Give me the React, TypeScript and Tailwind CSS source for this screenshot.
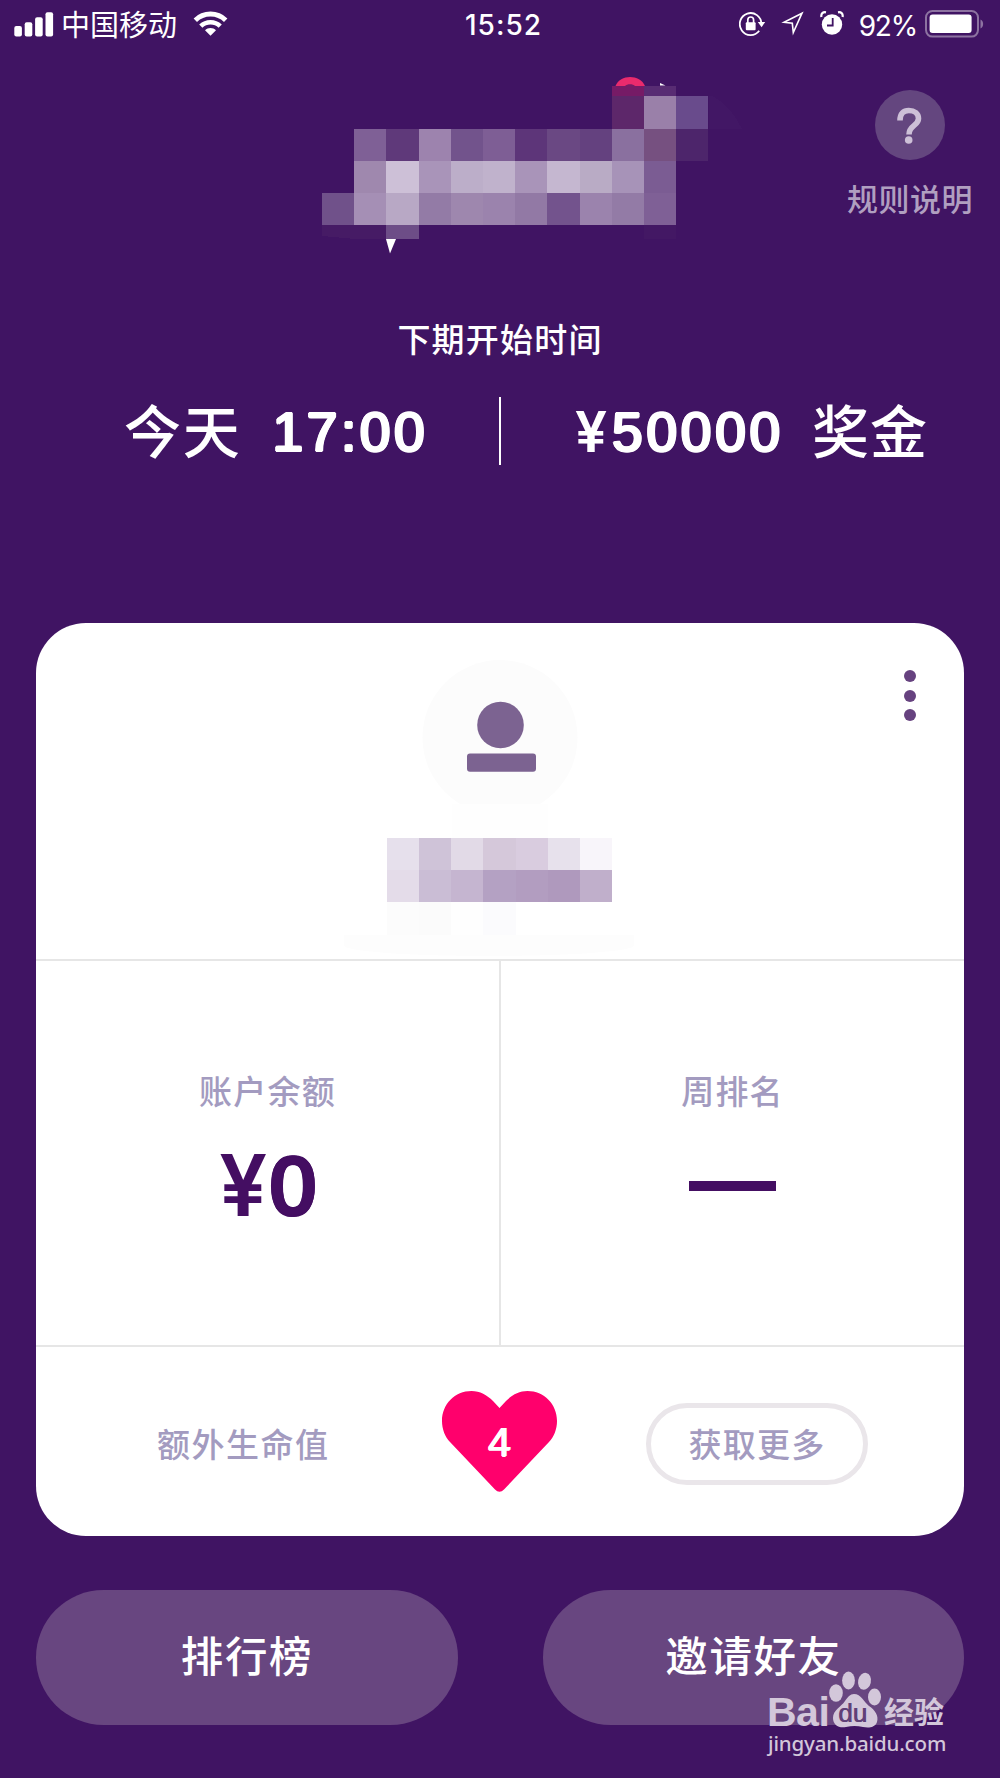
import React from "react";

const CJK = "font-['Liberation_Sans','Noto_Sans_CJK_SC',sans-serif]";
const ROUND = "font-['Liberation_Sans',sans-serif]";
const YEN = "font-['Inter',sans-serif] font-semibold";

/* Evenly spaced copies around each glyph thicken it and round off its corners. */
const SOFT_SM =
  "[text-shadow:0.8px_0_currentColor,-0.8px_0_currentColor,0_1px_currentColor]";
const SOFT_MD =
  "[text-shadow:1.5px_0_currentColor,-1.5px_0_currentColor,0.8px_1px_currentColor,-0.8px_1px_currentColor,0.8px_-1px_currentColor,-0.8px_-1px_currentColor]";
const SOFT_LG =
  "[text-shadow:2.4px_0_currentColor,-2.4px_0_currentColor,2px_1px_currentColor,-2px_1px_currentColor,2px_-1px_currentColor,-2px_-1px_currentColor,1px_2px_currentColor,-1px_2px_currentColor,1px_-2px_currentColor,-1px_-2px_currentColor]";

type Cell = [col: number, row: number, color: string];

const LOGO_ROWS = [
  { y: 25.5, h: 11 },
  { y: 36.3, h: 32.3 },
  { y: 68.6, h: 32.3 },
  { y: 100.9, h: 32.3 },
  { y: 133.2, h: 32 },
  { y: 165.2, h: 13.8 },
];

const LOGO_CELLS: Cell[] = [
  [9, 0, "#761b66"], [10, 0, "#582c73"],
  [9, 1, "#5d276a"], [10, 1, "#9a80a9"], [11, 1, "#694b8c"],
  [1, 2, "#7f6096"], [2, 2, "#5f397a"], [3, 2, "#9d83ae"], [4, 2, "#72538c"], [5, 2, "#7e5e95"],
  [6, 2, "#5d3579"], [7, 2, "#6a4883"], [8, 2, "#64417f"], [9, 2, "#8a709f"], [10, 2, "#765080"], [11, 2, "#4d256b"],
  [1, 3, "#9f88ae"], [2, 3, "#cdc0d7"], [3, 3, "#a994b9"], [4, 3, "#bcaec9"], [5, 3, "#c0b2cc"],
  [6, 3, "#a994b9"], [7, 3, "#c5b7d0"], [8, 3, "#b9abc5"], [9, 3, "#a793b8"], [10, 3, "#7b5c93"],
  [0, 4, "#70518a"], [1, 4, "#a58fb5"], [2, 4, "#b8a8c5"], [3, 4, "#937ba6"], [4, 4, "#9e87ae"],
  [5, 4, "#9b83ad"], [6, 4, "#9279a5"], [7, 4, "#73538d"], [8, 4, "#9b83ad"], [9, 4, "#937ba6"], [10, 4, "#7f6096"],
  [2, 5, "#6d4d87"], [10, 5, "#431864"],
];

const NAME_ROWS = [
  ["#e6e0ec", "#cfc3d8", "#e2dae7", "#d5c8da", "#d9ccdf", "#e7e1ec", "#f8f5fa"],
  ["#e4dce9", "#cabdd5", "#c5b5d0", "#b4a1c3", "#b29dc0", "#af99bd", "#c0afcb"],
  ["#fcfcfc", "#fbfbfb", "#fefefe", "#fbfbfd", "#ffffff", "#ffffff", "#ffffff"],
];

function StatusBar() {
  return (
    <header className={`grid h-[50px] shrink-0 grid-cols-[1fr_auto_1fr] items-center text-white ${CJK}`}>
      <div className="flex items-center pl-[14px]">
        <svg className="-mt-[2px]" width="40" height="25" viewBox="0 0 40 25" fill="#fff">
          <rect x="0.3" y="14" width="7.6" height="10.5" rx="2" />
          <rect x="10.7" y="10.3" width="7.6" height="14.2" rx="2" />
          <rect x="21.1" y="5.3" width="7.6" height="19.2" rx="2" />
          <rect x="31.5" y="0.3" width="7.6" height="24.2" rx="2" />
        </svg>
        <span className="mt-px ml-[7px] text-[29px] leading-[50px]">中国移动</span>
        <svg className="-mt-[4px] ml-[16px]" width="35" height="26" viewBox="0 0 35 26" fill="none" stroke="#fff" strokeWidth="5">
          <path d="M2.3 9.2C10.6.9 24.4.9 32.7 9.2" strokeWidth="4.8" />
          <path d="M7.8 15.2C13.2 10 21.8 10 27.2 15.2" strokeWidth="4.6" />
          <path d="M17.5 24.8L12 19.2C15 16.3 20 16.3 23 19.2Z" fill="#fff" stroke="none" />
        </svg>
      </div>
      <span className="-mt-px pl-[7px] font-['Inter',sans-serif] text-[28px] leading-[50px] font-medium tracking-[1px]">15:52</span>
      <div className="-mt-[2px] flex items-center justify-end pr-[16px]">
        <svg className="-mt-[2px]" width="27" height="26" viewBox="0 0 27 26" fill="none" stroke="#fff" strokeWidth="1.8">
          <path d="M22.4 13A10.8 11 0 1 0 20.2 19.7" />
          <path d="M18.8 11H26.2L22.6 16.2Z" fill="#fff" stroke="none" />
          <rect x="6.8" y="11.2" width="9.8" height="8" rx="1" fill="#fff" stroke="none" />
          <path d="M8.8 12V9A2.9 3 0 0 1 14.6 9V12" strokeWidth="1.7" />
        </svg>
        <svg className="-mt-[2px] ml-[15px]" width="23" height="25" viewBox="0 0 23 25" fill="none" stroke="#fff" strokeWidth="1.6">
          <path d="M21 2.2L3 11.3L11.3 12.3L12.3 21.5Z" />
        </svg>
        <svg className="-mt-[2px] ml-[16px]" width="24" height="25" viewBox="0 0 24 25">
          <circle cx="12" cy="13.5" r="10.2" fill="#fff" />
          <path d="M1.4 6C.8 2.5 3 .8 6 1.3M22.6 6C23.2 2.5 21 .8 18 1.3" stroke="#fff" strokeWidth="2.2" fill="none" />
          <path d="M12.7 7V14.5H7" stroke="#401463" strokeWidth="1.8" fill="none" />
        </svg>
        <span className="mt-[2px] ml-[15px] font-['Inter',sans-serif] text-[28px] leading-[50px] tracking-[-1.2px]">92%</span>
        <svg className="-mt-px ml-[8px]" width="59" height="28" viewBox="0 0 59 28" fill="none">
          <rect x="1" y="1" width="52" height="25.6" rx="6.5" stroke="#8d73a1" strokeWidth="2" />
          <rect x="4.6" y="4.6" width="42" height="18.4" rx="3" fill="#fff" />
          <path d="M55.5 9.5C59 11 59 17 55.5 18.5Z" fill="#8d73a1" />
        </svg>
      </div>
    </header>
  );
}

function PixelLogo() {
  return (
    <svg width="460" height="200" viewBox="0 0 460 200" shapeRendering="crispEdges">
      <path d="M408.7 36.3H413C425 43 434 53 442 69H408.7Z" fill="#421765" />
      <path d="M22 165.2H86.5V179H56L22 176Z" fill="#461b65" />
      <path d="M315.5 26C320 14 340 14 345 26Z" fill="#e92b6d" shapeRendering="auto" />
      <path d="M325 26C327 23.5 333 23.5 335 26Z" fill="#761b66" shapeRendering="auto" />
      <path d="M360 23L365.5 25.5H360Z" fill="#fff" shapeRendering="auto" />
      {LOGO_CELLS.map(([c, r, color]) => (
        <rect key={`${c}-${r}`} x={22 + c * 32.2} y={LOGO_ROWS[r].y} width={32.2} height={LOGO_ROWS[r].h} fill={color} />
      ))}
      <path d="M86 179H96L90 193.5Z" fill="#fff" shapeRendering="auto" />
    </svg>
  );
}

function Hero() {
  return (
    <section className="grid h-[220px] shrink-0 grid-cols-[300px_460px_1fr]">
      <div />
      <div className="pt-[10px]">
        <PixelLogo />
      </div>
      <div className="flex flex-col items-center pt-10 pl-[60px]">
        <div className="flex size-[70px] items-center justify-center rounded-full bg-[#64467f]">
          <svg className="-ml-[2px]" width="26" height="38" viewBox="0 0 26 38" fill="none">
            <path d="M4 14.5C4 7.5 7.5 4.5 12.8 4.5C18.5 4.5 22.5 7.5 22.5 12.5C22.5 20 13 19 13 28.5" stroke="#cdc0d7" strokeWidth="5.6" />
            <circle cx="12.7" cy="34" r="3.8" fill="#cdc0d7" />
          </svg>
        </div>
        <span className={`mt-[18px] text-[31px] leading-[46px] font-medium tracking-[0.5px] whitespace-nowrap text-[#b09fc0] ${CJK}`}>规则说明</span>
      </div>
    </section>
  );
}

function NextRound() {
  return (
    <section className="flex h-[353px] shrink-0 flex-col items-center pt-[46px] text-white">
      <h2 className={`text-[33px] leading-[50px] font-medium tracking-[1.2px] ${CJK}`}>下期开始时间</h2>
      <div className="mt-[28px] grid h-[68px] w-full grid-cols-[499px_2px_499px] items-center">
        <div className="flex items-center pl-[124px]">
          <span className={`mt-[5px] text-[57px] leading-[68px] font-medium tracking-[1.8px] whitespace-nowrap ${CJK}`}>今天</span>
          <span className={`mt-[3px] ml-[31px] text-[55px] leading-[68px] tracking-[3.6px] ${SOFT_MD} ${ROUND}`}>17:00</span>
        </div>
        <div className="h-[68px] bg-white" />
        <div className="flex items-center pl-[74px]">
          <span className={`mt-[3px] w-[37px] text-[57px] leading-[68px] ${YEN}`}>¥</span>
          <span className={`mt-[3px] text-[55px] leading-[68px] tracking-[3.8px] ${SOFT_MD} ${ROUND}`}>50000</span>
          <span className={`mt-[5px] ml-[28px] text-[57px] leading-[68px] font-medium tracking-[1px] whitespace-nowrap ${CJK}`}>奖金</span>
        </div>
      </div>
    </section>
  );
}

function Profile() {
  return (
    <div className="relative flex h-[336px] flex-col items-center pt-[37px]">
      <svg width="156" height="144" viewBox="0 0 156 144">
        <circle cx="78" cy="77.5" r="77.5" fill="#fcfcfc" />
        <circle cx="78.5" cy="65" r="23.3" fill="#7c6391" />
        <rect x="45" y="93.5" width="69" height="18.3" rx="3" fill="#7c6391" />
      </svg>
      <div className="h-[34px] w-24 bg-[#fefefe]" />
      <div className="mr-px grid grid-cols-[repeat(7,32.2px)] grid-rows-[repeat(3,32.2px)]">
        {NAME_ROWS.flat().map((color, i) => (
          <div key={i} style={{ backgroundColor: color }} />
        ))}
      </div>
      <div className="mr-[22px] h-[21px] w-[290px] rounded-b-[100%] bg-[#fdfdfd]" />
      <button aria-label="More" className="absolute top-[47px] right-[48px] flex flex-col gap-[7.5px]">
        <span className="size-3 rounded-full bg-[#66427f]" />
        <span className="size-3 rounded-full bg-[#66427f]" />
        <span className="size-3 rounded-full bg-[#66427f]" />
      </button>
    </div>
  );
}

function Heart() {
  return (
    <div className="relative h-[102px] w-[115px]">
      <svg width="115" height="102" viewBox="0 0 115 102">
        <path d="M57.5 17L51 10C45 4 38 0 29.5 0C13 0 0 13 0 30C0 38 3 46 8 51L53 98.5Q57.5 103 62 98.5L107 51C112 46 115 38 115 30C115 13 102 0 85.5 0C77 0 70 4 64 10Z" fill="#ff006c" />
      </svg>
      <span className={`absolute inset-x-0 top-[30px] text-center text-[41px] leading-[42px] text-white ${SOFT_SM} ${ROUND}`}>4</span>
    </div>
  );
}

function Card() {
  return (
    <section className={`mx-9 flex h-[913px] shrink-0 flex-col overflow-hidden rounded-[50px] bg-white ${CJK}`}>
      <Profile />
      <div className="grid h-[388px] grid-cols-[465px_1fr] border-y-2 border-[#e6e6e6] text-center">
        <div className="border-r-2 border-[#e6e6e6] pt-[107px]">
          <div className="text-[33px] leading-[50px] font-medium tracking-[1.2px] text-[#a39bc0]">账户余额</div>
          <div className="mt-[22px] flex justify-center text-[#440e62]">
            <span className={`pr-[3px] text-[85px] leading-[92px] ${YEN}`}>¥</span>
            <span className={`text-[82px] leading-[92px] ${SOFT_LG} ${ROUND}`}>0</span>
          </div>
        </div>
        <div className="flex flex-col items-center pt-[107px]">
          <div className="text-[33px] leading-[50px] font-medium tracking-[1.2px] text-[#a39bc0]">周排名</div>
          <div className="mt-[63px] h-[10px] w-[87px] bg-[#440e62]" />
        </div>
      </div>
      <div className="flex h-[189px] items-center pl-[121px]">
        <span className="mt-[8px] w-[285px] text-[33px] leading-[50px] font-medium tracking-[1.5px] text-[#a39bc0]">额外生命值</span>
        <Heart />
        <button className="mt-[5px] ml-[89px] h-[82px] w-[222px] rounded-full border-[5px] border-[#eae6ea] pt-[3px] text-[33px] font-medium tracking-[1.2px] text-[#a39bc0]">
          获取更多
        </button>
      </div>
    </section>
  );
}

function Watermark() {
  return (
    <div className="absolute right-[50px] bottom-[20px] w-[182px] text-[#d3c7da]">
      <div className="relative h-[60px]">
        <span className="absolute bottom-[2px] left-[-1px] font-['Liberation_Sans',sans-serif] text-[41px] leading-[30px] font-bold tracking-[-0.5px]">Bai</span>
        <svg className="absolute bottom-0 left-[60px]" width="54" height="58" viewBox="0 0 54 58" fill="currentColor">
          <ellipse cx="8" cy="22" rx="6.8" ry="8.8" />
          <ellipse cx="20.5" cy="9.5" rx="6.4" ry="9" />
          <ellipse cx="36.5" cy="10.3" rx="6.4" ry="8.5" transform="rotate(12 36.5 10.3)" />
          <ellipse cx="46.5" cy="26" rx="6.5" ry="8.5" />
          <path d="M26 23C33 23 36 31 41 35C47 39 51 45 49 51C47 57 40 57 35 56C29 54.5 24 54.5 18 56C11 57.5 5 54 5 47C5 39 13 36 17 30C20 26 22 23 26 23Z" />
        </svg>
        <span className="absolute bottom-[3px] left-[70px] font-['Liberation_Sans',sans-serif] text-[26px] leading-[25px] text-[#604078] [text-shadow:0.7px_0_currentColor]">du</span>
        <span className={`absolute right-[6px] bottom-px text-[30px] leading-[30px] font-bold whitespace-nowrap ${CJK}`}>经验</span>
      </div>
      <div className="font-['Noto_Sans',sans-serif] text-[20.5px] leading-[29px] font-medium tracking-[-0.15px] whitespace-nowrap">jingyan.baidu.com</div>
    </div>
  );
}

export default function App() {
  return (
    <main className="relative flex h-[1778px] w-[1000px] flex-col overflow-hidden bg-[#401463]">
      <StatusBar />
      <Hero />
      <NextRound />
      <Card />
      <nav className={`mt-[54px] flex justify-between px-9 text-[42.5px] font-medium tracking-[1.6px] text-white ${CJK}`}>
        <button className="h-[135px] w-[422px] rounded-full bg-[#684680]">排行榜</button>
        <button className="h-[135px] w-[421px] rounded-full bg-[#684680]">邀请好友</button>
      </nav>
      <Watermark />
    </main>
  );
}
